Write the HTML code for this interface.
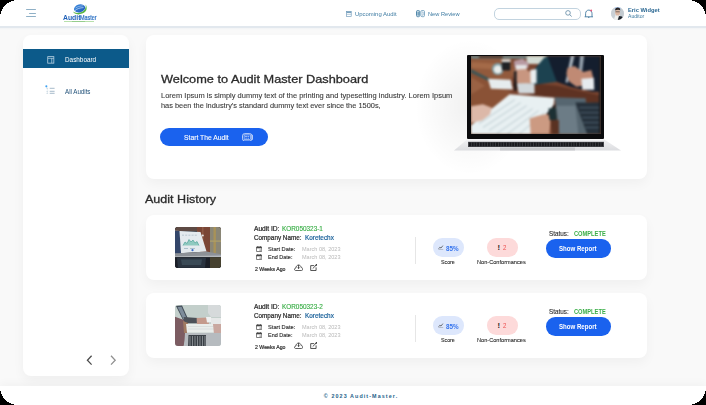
<!DOCTYPE html>
<html><head><meta charset="utf-8">
<style>
*{margin:0;padding:0;box-sizing:border-box}
html,body{width:706px;height:405px;overflow:hidden;background:#000}
body{font-family:"Liberation Sans",sans-serif;position:relative}
#app{position:absolute;left:0;top:0;width:706px;height:405px;overflow:hidden;background:#f9f9f9}
.abs{position:absolute}
.t{position:absolute;white-space:nowrap;line-height:1;transform-origin:0 0}
</style></head><body>
<div id="app">
<div class="abs" style="left:0px;top:0px;width:706px;height:26px;background:#fff;"></div>
<div class="abs" style="left:0px;top:26px;width:706px;height:2.2px;background:#e2e8ee;"></div>
<div class="abs" style="left:0;top:28px;width:706px;height:2px;background:linear-gradient(#f1f3f5,#f9f9f9)"></div>
<div class="abs" style="left:26.2px;top:9.2px;width:9.8px;height:0.9px;background:#8fb0c6;border-radius:1px"></div>
<div class="abs" style="left:29.2px;top:12.9px;width:6.8px;height:0.9px;background:#8fb0c6;border-radius:1px"></div>
<div class="abs" style="left:26.2px;top:15.9px;width:9.8px;height:0.9px;background:#8fb0c6;border-radius:1px"></div>
<svg class="abs" style="left:70px;top:2px" width="20" height="14" viewBox="0 0 20 14">
<defs><linearGradient id="lg1" x1="0" y1="0" x2="1" y2="1"><stop offset="0" stop-color="#3f8ee0"/><stop offset="1" stop-color="#1d56b8"/></linearGradient></defs>
<path d="M3.2 9.6 C3.8 13.2 12 13.4 15.4 9.6 C17.2 7.6 17 4.2 15.6 2.4 C16.2 4.6 15.6 7.4 13 9.2 C9.8 11.4 5 11.4 3.2 9.6 Z" fill="#58b640"/>
<ellipse cx="9.6" cy="6.4" rx="5.7" ry="3.9" fill="url(#lg1)" transform="rotate(-14 9.6 6.4)"/>
<path d="M5 8.6 C7 6.6 10 5.8 13.6 5.6" stroke="#cfe3f7" stroke-width="0.7" fill="none"/>
<path d="M5.6 6 C7.6 4.6 10.4 3.9 13.2 3.8" stroke="#b9d6f3" stroke-width="0.6" fill="none"/>
</svg>
<div class="t" style="left:62.80px;top:15.00px;font-size:6.541px;color:#1f60b8;font-weight:bold;transform:scaleX(1.0472);">Audit</div>
<div class="t" style="left:80.30px;top:15.00px;font-size:6.541px;color:#2a70c4;transform:scaleX(0.8355);-webkit-text-stroke:0.2px #2a70c4;">Master</div>
<div class="abs" style="left:63.6px;top:21.3px;width:30.6px;height:0.5px;background:#b8e0ac;"></div>
<div class="abs" style="left:72px;top:21.0px;width:13px;height:1.0px;background:#7fbf78;opacity:.6"></div>
<svg class="abs" style="left:345.8px;top:11.2px" width="6" height="6" viewBox="0 0 6 6">
<rect x="0.6" y="0.6" width="4.6" height="4.8" fill="none" stroke="#6d98b8" stroke-width="0.65"/>
<rect x="0.6" y="0.6" width="4.6" height="1.3" fill="#6d98b8"/>
<path d="M0.6 3.3 h4.6" stroke="#6d98b8" stroke-width="0.5"/>
</svg>
<div class="t" style="left:354.90px;top:12.00px;font-size:5.523px;color:#3f7ca3;transform:scaleX(1.0754);">Upcoming Audit</div>
<svg class="abs" style="left:416px;top:10.4px" width="9" height="7.2" viewBox="0 0 9 7.2">
<rect x="0.5" y="0.5" width="3.2" height="6.2" rx="1.2" fill="none" stroke="#3f7ca3" stroke-width="0.9"/>
<path d="M2.1 1.4 v4.4" stroke="#3f7ca3" stroke-width="1.2"/>
<rect x="4.9" y="0.5" width="3.6" height="6.2" rx="1.2" fill="none" stroke="#5a8fb3" stroke-width="0.75"/>
<path d="M6.2 2 h0.9 v3.2 h-0.9" stroke="#5a8fb3" stroke-width="0.6" fill="none"/>
</svg>
<div class="t" style="left:428.40px;top:12.00px;font-size:5.523px;color:#3f7ca3;transform:scaleX(1.0323);">New Review</div>
<div class="abs" style="left:493.6px;top:8.1px;width:87.2px;height:11.5px;border:0.8px solid #c2d3df;border-radius:5px;background:#fff"></div>
<svg class="abs" style="left:564.5px;top:10.3px" width="8" height="7" viewBox="0 0 8 7">
<circle cx="3" cy="2.9" r="2.3" fill="none" stroke="#55809e" stroke-width="0.75"/>
<path d="M4.7 4.6 L6.7 6.5" stroke="#55809e" stroke-width="0.8"/>
</svg>
<svg class="abs" style="left:584px;top:9px" width="10" height="10" viewBox="0 0 10 10">
<path d="M1.6 7.7 V4.6 C1.6 2.4 3 1.1 4.8 1.1 C6.6 1.1 8 2.4 8 4.6 V7.7" fill="none" stroke="#2d6b95" stroke-width="0.8"/>
<path d="M0.6 7.8 H9" stroke="#2d6b95" stroke-width="0.8"/>
<circle cx="4.8" cy="8.3" r="0.6" fill="#2d6b95"/>
<circle cx="7.2" cy="1.5" r="0.95" fill="#f0587a"/>
</svg>
<div class="abs" style="left:610.8px;top:6.7px;width:13.2px;height:13.2px;border-radius:50%;overflow:hidden;background:#d8dde2">
<svg width="13.2" height="13.2" viewBox="0 0 13.2 13.2" style="position:absolute;left:0;top:0">
<rect x="-1" y="-1" width="15" height="15" fill="#dfe3e7"/>
<rect x="-1" y="-1" width="5" height="15" fill="#c9d0d6"/>
<rect x="9" y="-1" width="5" height="15" fill="#c2cad0"/>
<ellipse cx="6.8" cy="1" rx="3" ry="1.6" fill="#a9c6ec"/>
<ellipse cx="6.6" cy="5.6" rx="2.4" ry="3.2" fill="#dcb8a4"/>
<path d="M4 3.6 C4 1.6 5.2 0.6 6.8 0.6 C8.4 0.6 9.4 1.6 9.2 3.4 C8.4 2.6 6 2.4 4 3.6Z" fill="#2c2624"/>
<path d="M4.4 4.8 h4.4" stroke="#3a3431" stroke-width="0.6"/>
<polygon points="2.5,13.5 4,9.2 6.6,8.4 8.2,9.5 7.2,13.5" fill="#f0f0ee"/>
<polygon points="6.6,13.5 8,9 11,9.6 13,12 13,13.5" fill="#1d232b"/>
</svg></div>
<div class="t" style="left:628.10px;top:8.00px;font-size:5.669px;color:#2a6792;font-weight:bold;transform:scaleX(1.0182);">Eric Widget</div>
<div class="t" style="left:628.10px;top:14.00px;font-size:5.233px;color:#3d7aa0;transform:scaleX(0.9773);">Auditor</div>
<div class="abs" style="left:23px;top:35px;width:105.7px;height:340.5px;background:#fff;border-radius:8px;box-shadow:0 5px 12px rgba(0,0,0,.045)"></div>
<div class="abs" style="left:23px;top:49.3px;width:105.7px;height:19.0px;background:#0c5a8a;"></div>
<svg class="abs" style="left:46.6px;top:55.5px" width="8" height="8" viewBox="0 0 8 8">
<rect x="0.75" y="0.65" width="6.1" height="6.5" fill="none" stroke="#c4dae8" stroke-width="0.75"/>
<path d="M0.8 2.3 h6 M4.75 2.3 v4.8" stroke="#c4dae8" stroke-width="0.7"/>
</svg>
<div class="t" style="left:64.90px;top:57.00px;font-size:6.686px;color:#ffffff;transform:scaleX(0.9539);">Dashboard</div>
<svg class="abs" style="left:44.6px;top:85.2px" width="11" height="10" viewBox="0 0 11 10">
<circle cx="1.35" cy="1.35" r="1.05" fill="#3ea2f2"/>
<path d="M4.7 3.3 h4.9 M4.7 6.3 h4.9 M4.7 8.3 h4.9" stroke="#5e82a0" stroke-width="0.55"/>
<path d="M1.5 3.3 h1.6 M1.5 6.3 h1.6 M1.5 8.3 h1.6" stroke="#8eaac0" stroke-width="0.5"/>
<path d="M2.2 4.2 L2.8 5.4 M2.2 7 L2.6 7.6" stroke="#b0c4d4" stroke-width="0.4"/>
</svg>
<div class="t" style="left:65.20px;top:89.00px;font-size:6.541px;color:#1c4d76;transform:scaleX(0.9479);">All Audits</div>
<svg class="abs" style="left:84px;top:353px" width="36" height="14" viewBox="0 0 36 14">
<path d="M7.6 2.8 L3.4 7.2 L7.6 11.6" stroke="#4a4a4a" stroke-width="1.25" fill="none"/>
<path d="M27 2.8 L31.2 7.2 L27 11.6" stroke="#8f8f8f" stroke-width="1.25" fill="none"/>
</svg>
<div class="abs" style="left:145.9px;top:35.3px;width:501.5px;height:143.5px;background:#fff;border-radius:8px;box-shadow:0 5px 12px rgba(0,0,0,.04)"></div>
<div class="t" style="left:161.00px;top:73.00px;font-size:11.773px;color:#2b2b2b;transform:scaleX(1.0835);-webkit-text-stroke:0.3px #2b2b2b;">Welcome to Audit Master Dashboard</div>
<div class="t" style="left:161.00px;top:92.00px;font-size:7.267px;color:#3a3a3a;transform:scaleX(1.0332);-webkit-text-stroke:0.1px #3a3a3a;">Lorem Ipsum is simply dummy text of the printing and typesetting industry. Lorem Ipsum</div>
<div class="t" style="left:161.00px;top:102.00px;font-size:7.267px;color:#3a3a3a;transform:scaleX(1.0218);-webkit-text-stroke:0.1px #3a3a3a;">has been the industry&#x27;s standard dummy text ever since the 1500s,</div>
<div class="abs" style="left:160.4px;top:127.6px;width:107.7px;height:18px;border-radius:9px;background:#1a62ee"></div>
<div class="t" style="left:183.90px;top:135.00px;font-size:6.541px;color:#ffffff;transform:scaleX(1.0336);-webkit-text-stroke:0.1px #fff;">Start The Audit</div>
<svg class="abs" style="left:242px;top:132.6px" width="11.4" height="8.6" viewBox="0 0 11.4 8.6">
<rect x="0.5" y="0.6" width="9.4" height="7.4" rx="2.2" fill="none" stroke="#dfe8fb" stroke-width="0.8"/>
<rect x="9.8" y="1.8" width="0.9" height="5" fill="#dfe8fb"/>
<rect x="2.1" y="1.9" width="6.2" height="4.8" fill="none" stroke="#dfe8fb" stroke-width="0.6"/>
<path d="M3 3.4 h2.2 M5.6 3.4 h1.6 M3.4 5.2 h1.4 M5.6 5.2 h1.4" stroke="#dfe8fb" stroke-width="0.7"/>
</svg>

<div class="abs" style="left:415px;top:35px;width:110px;height:144px;background:radial-gradient(ellipse 55px 68px at 55px 72px,rgba(0,0,0,.06),rgba(0,0,0,.025) 60%,rgba(0,0,0,0) 100%)"></div>
<svg class="abs" style="left:450px;top:138px" width="175" height="15" viewBox="0 0 175 15">
<defs><linearGradient id="bg1" x1="0" y1="0" x2="0" y2="1"><stop offset="0" stop-color="#f2f2f4"/><stop offset="1" stop-color="#dcdde0"/></linearGradient></defs>
<polygon points="17.3,1.2 153.9,1.2 171,12.5 4,12.5" fill="url(#bg1)"/>
<rect x="18" y="3.8" width="136" height="5.2" fill="#45464b"/>
<path d="M19 6.4 H153" stroke="#18191d" stroke-width="3.8" stroke-dasharray="2 0.7"/>
<rect x="50" y="9.4" width="75" height="3.1" fill="#c9cacd"/>
</svg>
<div class="abs" style="left:467.3px;top:54.8px;width:136.6px;height:84.6px;background:#0b0b0d;border-radius:1px"></div>
<div class="abs" style="left:470.6px;top:56.2px;width:130.2px;height:78px;overflow:hidden;background:#6b4a36">
  <svg width="130.2" height="78" viewBox="0 0 131 78.5" preserveAspectRatio="none" style="position:absolute;left:0;top:0;filter:blur(0.8px)">
    <rect x="-2" y="-2" width="135" height="83" fill="#7a4530"/>
    <rect x="-2" y="-2" width="70" height="4.5" fill="#6e8a8c"/>
    <rect x="8" y="-2" width="24" height="4" fill="#4a3a30"/>
    <rect x="56" y="-2" width="20" height="10" fill="#d4dcd4"/>
    <polygon points="-2,3 40,3 44,14 40,24 22,24 -2,14" fill="#925a3c"/>
    <polygon points="-2,6 30,8 34,14 -2,12" fill="#a46a48"/>
    <polygon points="-2,12 21,24 19,27 -2,16" fill="#3e5556"/>
    <polygon points="-2,16 19,26 40,36 38.9,38.4 0.5,69.5 -2,70" fill="#8a5236"/>
    <polygon points="-2,20 14,30 -2,40" fill="#9a6244"/>
    <polygon points="38,28 66,28 86,30 131,40 131,48 84,42 62,40" fill="#5e3222"/>
    <polygon points="61.4,16 73.8,1.5 86.3,-2 86.3,26 67.6,28.5 61.4,29.5" fill="#1c4250"/>
    <polygon points="76,-2 133,-2 133,36 122,36 100,31 86.3,26" fill="#141e2e"/>
    <polygon points="101,-2 104.5,-2 97.5,27 95,26.5" fill="#aeb8c2"/>
    <polygon points="110,-2 114,-2 111,22 108,22" fill="#98a4b0"/>
    <polygon points="97,12 104,10 113,16 121,14 123,22 119,29 106,31 99,26 96,18" fill="#c08a74"/>
    <polygon points="111,23 123.6,22 124,34 112,34" fill="#e6eaee"/>
    <circle cx="27" cy="13" r="6" fill="#7c9ea6"/>
    <circle cx="27" cy="13.5" r="4.2" fill="#e8ecea"/>
    <rect x="31" y="4.5" width="8.6" height="10" rx="1" fill="#1f2124"/>
    <rect x="30.6" y="3.4" width="9.4" height="2.6" rx="1.2" fill="#e8e8e4"/>
    <polygon points="43,5 52,2.8 58,7 57.6,12 44,12" fill="#b89aa2"/>
    <polygon points="45,9 56,9 56,14 45,14" fill="#e4e4e6"/>
    <polygon points="43,14 55,13 61,17 62.5,26 56,28.5 47,27.5 43,22" fill="#c89680"/>
    <polygon points="59.6,14 66,13 66,27.4 60,27.4" fill="#e9eef0"/>
    <polygon points="17,23 40,24 42,33.7 20,33" fill="#e6ecee"/>
    <polygon points="46,27.4 63.8,27.4 64,37.8 48,37.8" fill="#d2d8dc"/>
    <rect x="43.4" y="15" width="2.4" height="20" fill="#141416"/>
    <polygon points="38.9,38.4 84,42 83.2,48.8 73.8,65.4 67.4,78.5 -2,80 -2,71 0.5,69.5" fill="#e8f0f2"/>
    <path d="M8 68 L44 44 M12 72 L50 47 M18 75 L56 50 M26 78 L62 53 M36 79 L68 55 M48 79 L74 57" stroke="#a6b8c0" stroke-width="0.7"/>
    <polygon points="-2,51 12,48.5 21,52 19,59 11,65 -2,68" fill="#dcb8a8"/>
    <polygon points="59,63 67,60.5 77,58 80,64 79,78.5 60,78.5" fill="#cc9a82"/>
    <polygon points="75.9,58.1 84.2,48.8 85.6,50 77,59.4" fill="#141416"/>
    <polygon points="78,52.9 86.3,52 86.3,64.3 79,64.3" fill="#1c3034"/>
    <polygon points="84.2,41.5 115.3,42.5 119.5,78.5 88.4,78.5" fill="#566670"/>
    <polygon points="86,50 105,50 108,78.5 89,78.5" fill="#6c7c86"/>
    <polygon points="105,46.7 133,46.7 133,80 117.4,80" fill="#25303a"/>
    <path d="M109 52 H131 M110 57 H131 M112 62 H131 M113 67 H131 M115 72 H131" stroke="#4f6272" stroke-width="1"/>
    <polygon points="80,64.3 88.4,64.3 88.4,80 82,80" fill="#5a3222"/>
    <rect x="128.8" y="-2" width="5" height="83" fill="#1a1c20"/>
  </svg>
</div>
<div class="t" style="left:145.10px;top:194.00px;font-size:11.483px;color:#2b2b2b;transform:scaleX(1.0940);-webkit-text-stroke:0.3px #2b2b2b;">Audit History</div>
<div class="abs" style="left:145.7px;top:214.8px;width:501.5px;height:65px;background:#fff;border-radius:8px;box-shadow:0 5px 12px rgba(0,0,0,.04)"></div>
<div class="abs" style="left:174.9px;top:227.1px;width:46px;height:40.8px;border-radius:3px;overflow:hidden;background:#3a3a40">
<svg width="46" height="40.8" viewBox="0 0 46 40.8" style="position:absolute;left:0;top:0">
<rect x="-2" y="-2" width="50" height="45" fill="#262a33"/>
<rect x="-2" y="-2" width="50" height="6" fill="#5e4a44"/>
<rect x="22" y="-2" width="14" height="31" fill="#7a4636"/>
<rect x="27" y="-2" width="1.5" height="31" fill="#8e5a46"/>
<rect x="35" y="-2" width="13" height="31" fill="#8a8676"/>
<rect x="38.5" y="-2" width="2.4" height="31" fill="#a89258"/>
<rect x="35" y="13.5" width="13" height="1.2" fill="#b0a068"/>
<polygon points="-2,3.6 25.5,5 31.5,24.6 1.5,26.6 -2,26.6" fill="#e4eaee"/>
<polygon points="-2,3.6 4.5,3.9 6,26.2 -2,26.6" fill="#33466a"/>
<path d="M7 8.2 h15" stroke="#b6c2cc" stroke-width="0.9" stroke-dasharray="2 1.2"/>
<polygon points="8,18.5 10,15 12,16.5 14,12.5 16,15 18,13 20,16 22,14.5 24,18.5" fill="#8fcac0"/>
<path d="M8 18.5 L10 15 L12 16.5 L14 12.5 L16 15 L18 13 L20 16 L22 14.5 L24 18.5" stroke="#3f9a90" stroke-width="0.6" fill="none"/>
<path d="M9 21.5 h4 M15 21.5 h5" stroke="#9cb4c0" stroke-width="0.8"/>
<circle cx="17.5" cy="23.2" r="1.1" fill="#3a6ac8"/>
<circle cx="27.8" cy="8.5" r="1" fill="#e6e6e6"/>
<polygon points="-2,26.6 31.5,24.6 46,27.2 46,30.2 -2,30.2" fill="#8d9197"/>
<polygon points="-2,29.2 46,28.6 46,30.2 -2,30.2" fill="#b4b8bc"/>
<rect x="-2" y="30.2" width="50" height="12" fill="#1b1f27"/>
<polygon points="2,30.8 31,30.8 30,40.8 3,40.8" fill="#2a3440"/>
<polygon points="6,32.5 27,32.5 26,38 7,38" fill="#3a4a56"/>
<rect x="35" y="30.2" width="13" height="12" fill="#46412f"/>
</svg></div>
<div class="t" style="left:254.20px;top:226.00px;font-size:6.395px;color:#2a2a2a;transform:scaleX(1.0397);-webkit-text-stroke:0.22px #2a2a2a;">Audit ID:</div>
<div class="t" style="left:281.90px;top:226.00px;font-size:6.395px;color:#3aae47;transform:scaleX(1.0028);-webkit-text-stroke:0.15px #3aae47;">KOR050323-1</div>
<div class="t" style="left:254.20px;top:235.00px;font-size:6.541px;color:#2a2a2a;transform:scaleX(0.9679);-webkit-text-stroke:0.22px #2a2a2a;">Company Name:</div>
<div class="t" style="left:305.00px;top:235.00px;font-size:6.541px;color:#1a619a;transform:scaleX(0.9815);-webkit-text-stroke:0.2px #1a619a;">Koretechx</div>
<svg class="abs" style="left:256px;top:246.2px" width="6.4" height="6" viewBox="0 0 6.4 6">
<rect x="0.4" y="0.9" width="5.4" height="4.7" rx="0.6" fill="none" stroke="#444" stroke-width="0.75"/>
<rect x="0.4" y="0.9" width="5.4" height="1.4" fill="#444"/>
<path d="M1.7 0.1 v1 M4.5 0.1 v1" stroke="#444" stroke-width="0.6"/>
<rect x="3.6" y="3.6" width="1.1" height="1" fill="#444"/>
</svg>
<svg class="abs" style="left:256px;top:254.1px" width="6.4" height="6" viewBox="0 0 6.4 6">
<rect x="0.4" y="0.9" width="5.4" height="4.7" rx="0.6" fill="none" stroke="#444" stroke-width="0.75"/>
<rect x="0.4" y="0.9" width="5.4" height="1.4" fill="#444"/>
<path d="M1.7 0.1 v1 M4.5 0.1 v1" stroke="#444" stroke-width="0.6"/>
<rect x="3.6" y="3.6" width="1.1" height="1" fill="#444"/>
</svg>
<div class="t" style="left:267.70px;top:246.00px;font-size:6.105px;color:#333;transform:scaleX(0.9356);-webkit-text-stroke:0.15px #2a2a2a;">Start Date:</div>
<div class="t" style="left:302.10px;top:246.00px;font-size:6.105px;color:#b9b9b9;transform:scaleX(0.9099);">March 08, 2023</div>
<div class="t" style="left:267.70px;top:254.00px;font-size:6.105px;color:#333;transform:scaleX(0.9025);-webkit-text-stroke:0.15px #2a2a2a;">End Date:</div>
<div class="t" style="left:302.10px;top:254.00px;font-size:6.105px;color:#b9b9b9;transform:scaleX(0.9099);">March 08, 2023</div>
<div class="t" style="left:254.50px;top:267.00px;font-size:5.814px;color:#2a2a2a;transform:scaleX(0.8960);-webkit-text-stroke:0.2px #2a2a2a;">2 Weeks Ago</div>
<svg class="abs" style="left:293.6px;top:264.4px" width="9.6" height="7.2" viewBox="0 0 9.6 7.2">
<path d="M1.6 6.5 C0.7 6.5 0.4 5.8 0.5 5.1 C0.6 4.4 1.2 4 1.9 4 C2 2.3 3.1 1.1 4.6 1.1 C6 1.1 7 2.1 7.2 3.6 C8.3 3.6 8.9 4.3 8.9 5.1 C8.9 5.9 8.3 6.5 7.5 6.5 Z" fill="none" stroke="#2a2a2a" stroke-width="0.75"/>
<path d="M4.6 0.8 V4.2" stroke="#2a2a2a" stroke-width="0.8"/>
<path d="M3.3 3.5 L4.6 5.1 L5.9 3.5 Z" fill="#2a2a2a"/>
</svg>
<svg class="abs" style="left:309.8px;top:264.3px" width="7.4" height="7.2" viewBox="0 0 7.4 7.2">
<path d="M4.2 1.6 H0.7 V6.5 H6.1 V3.4" fill="none" stroke="#2a2a2a" stroke-width="0.8"/>
<path d="M2.7 4.6 L6 1.3" stroke="#555" stroke-width="1"/>
<path d="M5.6 1.7 L6.9 0.4" stroke="#111" stroke-width="1.2"/>
</svg>
<div class="abs" style="left:415.2px;top:237px;width:0.7px;height:26.7px;background:#e6e6e6;"></div>
<div class="abs" style="left:433px;top:238.4px;width:31.3px;height:18.3px;border-radius:9.2px;background:#dde7fc"></div>
<svg class="abs" style="left:438.4px;top:244.6px" width="5.6" height="5.6" viewBox="0 0 5.6 5.6">
<path d="M0.4 5.1 H5.2" stroke="#333" stroke-width="0.6" fill="none"/>
<path d="M0.6 3.8 L1.9 2.2 L3 3.1 L4.9 0.6" stroke="#333" stroke-width="0.65" fill="none"/>
</svg>
<div class="t" style="left:446.40px;top:246.00px;font-size:6.831px;color:#3674ee;font-weight:bold;transform:scaleX(0.9218);">85%</div>
<div class="t" style="left:440.90px;top:259.00px;font-size:6.105px;color:#2a2a2a;transform:scaleX(0.8655);-webkit-text-stroke:0.1px #2a2a2a;">Score</div>
<div class="abs" style="left:487px;top:238.4px;width:31.3px;height:18.3px;border-radius:9.2px;background:#fddada"></div>
<div class="t" style="left:497.60px;top:244.00px;font-size:7.558px;color:#222;font-weight:bold;">!</div>
<div class="t" style="left:502.90px;top:245.00px;font-size:6.541px;color:#ee4f4f;transform:scaleX(0.9349);">2</div>
<div class="t" style="left:477.20px;top:259.00px;font-size:6.105px;color:#2a2a2a;transform:scaleX(0.9220);-webkit-text-stroke:0.1px #2a2a2a;">Non-Conformances</div>
<div class="t" style="left:549.20px;top:231.00px;font-size:6.395px;color:#2a2a2a;transform:scaleX(0.9945);-webkit-text-stroke:0.1px #2a2a2a;">Status:</div>
<div class="t" style="left:574.00px;top:231.00px;font-size:6.395px;color:#3aae47;font-weight:bold;transform:scaleX(0.8950);">COMPLETE</div>
<div class="abs" style="left:545.6px;top:239.2px;width:65.2px;height:18.4px;border-radius:9.2px;background:#1a62ee"></div>
<div class="t" style="left:559.40px;top:246.00px;font-size:7.122px;color:#ffffff;font-weight:bold;transform:scaleX(0.8561);">Show Report</div>
<div class="abs" style="left:145.7px;top:292.8px;width:501.5px;height:65px;background:#fff;border-radius:8px;box-shadow:0 5px 12px rgba(0,0,0,.04)"></div>
<div class="abs" style="left:174.9px;top:305.1px;width:46px;height:40.8px;border-radius:3px;overflow:hidden;background:#c9d3d0">
<svg width="46" height="40.8" viewBox="0 0 46 40.8" style="position:absolute;left:0;top:0">
<rect x="-2" y="-2" width="50" height="45" fill="#c3cfcb"/>
<polygon points="1,1 7,0.5 14,16 9,17" fill="#404a55"/>
<polygon points="2.5,2 6.5,1.8 12,14 8.5,14.5" fill="#7d8c9a"/>
<polygon points="8.6,12 22.8,13 22.8,18.3 10,18.3" fill="#4c5158"/>
<polygon points="33,-2 48,-2 48,12 36,12 33,8" fill="#d6dadb"/>
<polygon points="21.6,13 33,12.5 34,19.5 22,19.5" fill="#c49a8c"/>
<polygon points="31,12 36,12 37,17 32,17.5" fill="#eef0f0"/>
<polygon points="36,13 48,13 48,19.5 36,19.5" fill="#e6e8e8"/>
<polygon points="-2,11 9,15 12,28 8,43 -2,43" fill="#7c5c62"/>
<polygon points="8,16 13,18 12,28 9,28" fill="#a07a62"/>
<polygon points="11,19 40,19 41,27.5 12,27.5" fill="#e9edeb"/>
<path d="M13 21.5 h26 M13 24 h27" stroke="#c8cecc" stroke-width="0.5"/>
<polygon points="38,19 48,19 48,29.5 39,29.5" fill="#c9a8a0"/>
<polygon points="10,28 48,28 48,43 9,43" fill="#b6bbbf"/>
<polygon points="13.5,30 31,30 31,43 13,43" fill="#3a4046"/>
<path d="M15 31 v10 M17.5 31 v10 M20 31 v10 M22.5 31 v10 M25 31 v10 M27.5 31 v10 M30 31 v10" stroke="#d0d5d9" stroke-width="0.5"/>
</svg></div>
<div class="t" style="left:254.20px;top:304.00px;font-size:6.395px;color:#2a2a2a;transform:scaleX(1.0397);-webkit-text-stroke:0.22px #2a2a2a;">Audit ID:</div>
<div class="t" style="left:281.90px;top:304.00px;font-size:6.395px;color:#3aae47;transform:scaleX(1.0028);-webkit-text-stroke:0.15px #3aae47;">KOR050323-2</div>
<div class="t" style="left:254.20px;top:313.00px;font-size:6.541px;color:#2a2a2a;transform:scaleX(0.9679);-webkit-text-stroke:0.22px #2a2a2a;">Company Name:</div>
<div class="t" style="left:305.00px;top:313.00px;font-size:6.541px;color:#1a619a;transform:scaleX(0.9815);-webkit-text-stroke:0.2px #1a619a;">Koretechx</div>
<svg class="abs" style="left:256px;top:324.2px" width="6.4" height="6" viewBox="0 0 6.4 6">
<rect x="0.4" y="0.9" width="5.4" height="4.7" rx="0.6" fill="none" stroke="#444" stroke-width="0.75"/>
<rect x="0.4" y="0.9" width="5.4" height="1.4" fill="#444"/>
<path d="M1.7 0.1 v1 M4.5 0.1 v1" stroke="#444" stroke-width="0.6"/>
<rect x="3.6" y="3.6" width="1.1" height="1" fill="#444"/>
</svg>
<svg class="abs" style="left:256px;top:332.1px" width="6.4" height="6" viewBox="0 0 6.4 6">
<rect x="0.4" y="0.9" width="5.4" height="4.7" rx="0.6" fill="none" stroke="#444" stroke-width="0.75"/>
<rect x="0.4" y="0.9" width="5.4" height="1.4" fill="#444"/>
<path d="M1.7 0.1 v1 M4.5 0.1 v1" stroke="#444" stroke-width="0.6"/>
<rect x="3.6" y="3.6" width="1.1" height="1" fill="#444"/>
</svg>
<div class="t" style="left:267.70px;top:324.00px;font-size:6.105px;color:#333;transform:scaleX(0.9356);-webkit-text-stroke:0.15px #2a2a2a;">Start Date:</div>
<div class="t" style="left:302.10px;top:324.00px;font-size:6.105px;color:#b9b9b9;transform:scaleX(0.9099);">March 08, 2023</div>
<div class="t" style="left:267.70px;top:332.00px;font-size:6.105px;color:#333;transform:scaleX(0.9025);-webkit-text-stroke:0.15px #2a2a2a;">End Date:</div>
<div class="t" style="left:302.10px;top:332.00px;font-size:6.105px;color:#b9b9b9;transform:scaleX(0.9099);">March 08, 2023</div>
<div class="t" style="left:254.50px;top:345.00px;font-size:5.814px;color:#2a2a2a;transform:scaleX(0.8960);-webkit-text-stroke:0.2px #2a2a2a;">2 Weeks Ago</div>
<svg class="abs" style="left:293.6px;top:342.4px" width="9.6" height="7.2" viewBox="0 0 9.6 7.2">
<path d="M1.6 6.5 C0.7 6.5 0.4 5.8 0.5 5.1 C0.6 4.4 1.2 4 1.9 4 C2 2.3 3.1 1.1 4.6 1.1 C6 1.1 7 2.1 7.2 3.6 C8.3 3.6 8.9 4.3 8.9 5.1 C8.9 5.9 8.3 6.5 7.5 6.5 Z" fill="none" stroke="#2a2a2a" stroke-width="0.75"/>
<path d="M4.6 0.8 V4.2" stroke="#2a2a2a" stroke-width="0.8"/>
<path d="M3.3 3.5 L4.6 5.1 L5.9 3.5 Z" fill="#2a2a2a"/>
</svg>
<svg class="abs" style="left:309.8px;top:342.3px" width="7.4" height="7.2" viewBox="0 0 7.4 7.2">
<path d="M4.2 1.6 H0.7 V6.5 H6.1 V3.4" fill="none" stroke="#2a2a2a" stroke-width="0.8"/>
<path d="M2.7 4.6 L6 1.3" stroke="#555" stroke-width="1"/>
<path d="M5.6 1.7 L6.9 0.4" stroke="#111" stroke-width="1.2"/>
</svg>
<div class="abs" style="left:415.2px;top:315px;width:0.7px;height:26.7px;background:#e6e6e6;"></div>
<div class="abs" style="left:433px;top:316.4px;width:31.3px;height:18.3px;border-radius:9.2px;background:#dde7fc"></div>
<svg class="abs" style="left:438.4px;top:322.6px" width="5.6" height="5.6" viewBox="0 0 5.6 5.6">
<path d="M0.4 5.1 H5.2" stroke="#333" stroke-width="0.6" fill="none"/>
<path d="M0.6 3.8 L1.9 2.2 L3 3.1 L4.9 0.6" stroke="#333" stroke-width="0.65" fill="none"/>
</svg>
<div class="t" style="left:446.40px;top:324.00px;font-size:6.831px;color:#3674ee;font-weight:bold;transform:scaleX(0.9218);">85%</div>
<div class="t" style="left:440.90px;top:337.00px;font-size:6.105px;color:#2a2a2a;transform:scaleX(0.8655);-webkit-text-stroke:0.1px #2a2a2a;">Score</div>
<div class="abs" style="left:487px;top:316.4px;width:31.3px;height:18.3px;border-radius:9.2px;background:#fddada"></div>
<div class="t" style="left:497.60px;top:322.00px;font-size:7.558px;color:#222;font-weight:bold;">!</div>
<div class="t" style="left:502.90px;top:323.00px;font-size:6.541px;color:#ee4f4f;transform:scaleX(0.9349);">2</div>
<div class="t" style="left:477.20px;top:337.00px;font-size:6.105px;color:#2a2a2a;transform:scaleX(0.9220);-webkit-text-stroke:0.1px #2a2a2a;">Non-Conformances</div>
<div class="t" style="left:549.20px;top:309.00px;font-size:6.395px;color:#2a2a2a;transform:scaleX(0.9945);-webkit-text-stroke:0.1px #2a2a2a;">Status:</div>
<div class="t" style="left:574.00px;top:309.00px;font-size:6.395px;color:#3aae47;font-weight:bold;transform:scaleX(0.8950);">COMPLETE</div>
<div class="abs" style="left:545.6px;top:317.2px;width:65.2px;height:18.4px;border-radius:9.2px;background:#1a62ee"></div>
<div class="t" style="left:559.40px;top:324.00px;font-size:7.122px;color:#ffffff;font-weight:bold;transform:scaleX(0.8561);">Show Report</div>
<div class="abs" style="left:0px;top:386.4px;width:706px;height:18.6px;background:#fff;box-shadow:0 -3px 8px rgba(0,0,0,.03)"></div>
<div class="t" style="left:323.80px;top:394.00px;font-size:5.378px;color:#1d5f8a;font-weight:bold;letter-spacing:1.091px;">© 2023 Audit-Master.</div>
<svg class="abs" style="left:0;top:0" width="706" height="405" viewBox="0 0 706 405" shape-rendering="crispEdges"><path d="M0 0 H18 A18 18 0 0 0 0 18 Z M706 0 V18 A18 18 0 0 0 688 0 Z M0 405 V387 A18 18 0 0 0 18 405 Z M706 405 H688 A18 18 0 0 0 706 387 Z" fill="#000"/></svg>
</div>
</body></html>
